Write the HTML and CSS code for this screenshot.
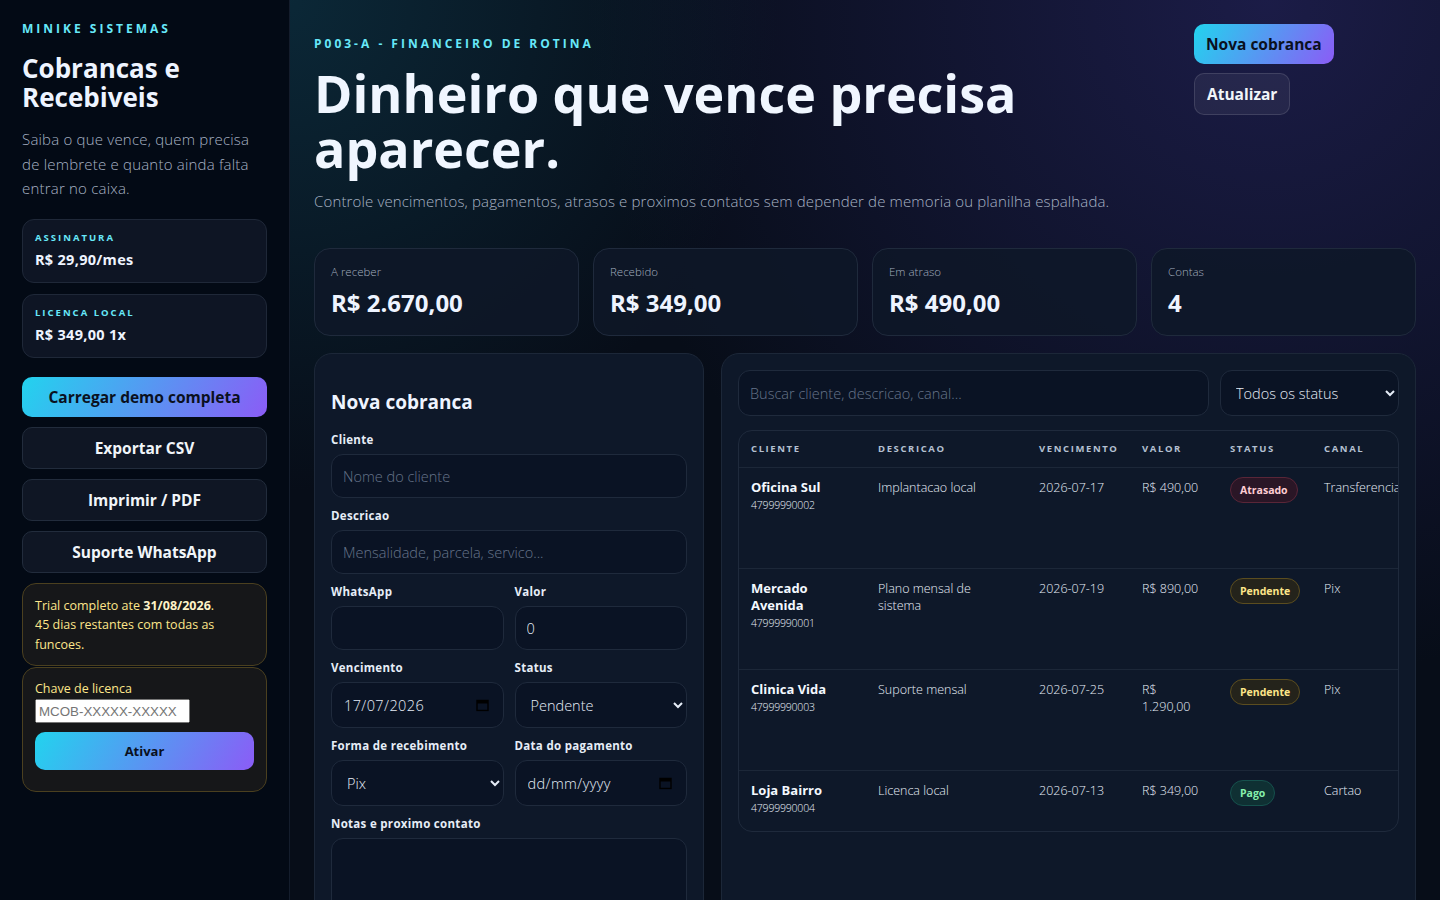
FILE: index.html
```html
<!DOCTYPE html>
<html lang="pt-BR">
<head>
  <meta charset="UTF-8">
  <title>Cobrancas e Recebiveis - Minike Sistemas</title>
  <meta name="viewport" content="width=device-width, initial-scale=1.0">
  <link rel="stylesheet" href="styles.css">
</head>
<body>
  <div class="app">
    <aside class="sidebar">
      <div class="brand">MINIKE SISTEMAS</div>
      <h1 class="side-title">Cobrancas e Recebiveis</h1>
      <p class="side-text">Saiba o que vence, quem precisa de lembrete e quanto ainda falta entrar no caixa.</p>

      <div class="plan">
        <span class="plan-label">Assinatura</span>
        <strong class="plan-price">R$ 29,90/mes</strong>
      </div>
      <div class="plan">
        <span class="plan-label">Licenca local</span>
        <strong class="plan-price">R$ 349,00 1x</strong>
      </div>

      <div class="side-actions">
        <button class="btn btn-primary btn-block">Carregar demo completa</button>
        <button class="btn btn-ghost btn-block">Exportar CSV</button>
        <button class="btn btn-ghost btn-block">Imprimir / PDF</button>
        <button class="btn btn-ghost btn-block">Suporte WhatsApp</button>
      </div>

      <div class="trial">
        Trial completo ate <b>31/08/2026</b>.<br>
        45 dias restantes com todas as funcoes.
      </div>
      <div class="license">
        <label for="licenseKey">Chave de licenca</label>
        <input id="licenseKey" class="license-input" placeholder="MCOB-XXXXX-XXXXX">
        <button class="btn btn-primary btn-block btn-small">Ativar</button>
      </div>
    </aside>

    <main class="main">
      <header class="hero">
        <div class="hero-text">
          <div class="eyebrow">P003-A - FINANCEIRO DE ROTINA</div>
          <h2 class="hero-title">Dinheiro que vence precisa aparecer.</h2>
          <p class="hero-sub">Controle vencimentos, pagamentos, atrasos e proximos contatos sem depender de memoria ou planilha espalhada.</p>
        </div>
        <div class="hero-actions">
          <button class="btn btn-primary">Nova cobranca</button>
          <button class="btn btn-soft">Atualizar</button>
        </div>
      </header>

      <section class="stats">
        <div class="stat"><span>A receber</span><strong>R$ 2.670,00</strong></div>
        <div class="stat"><span>Recebido</span><strong>R$ 349,00</strong></div>
        <div class="stat"><span>Em atraso</span><strong>R$ 490,00</strong></div>
        <div class="stat"><span>Contas</span><strong>4</strong></div>
      </section>

      <section class="workspace">
        <form class="panel form-panel">
          <h3>Nova cobranca</h3>
          <div class="field">
            <label>Cliente</label>
            <input class="control" placeholder="Nome do cliente">
          </div>
          <div class="field">
            <label>Descricao</label>
            <input class="control" placeholder="Mensalidade, parcela, servico...">
          </div>
          <div class="field-row">
            <div class="field">
              <label>WhatsApp</label>
              <input class="control">
            </div>
            <div class="field">
              <label>Valor</label>
              <input class="control" value="0">
            </div>
          </div>
          <div class="field-row">
            <div class="field">
              <label>Vencimento</label>
              <div class="date-box">
                <input class="control control-tall control-date" value="17/07/2026" placeholder="dd/mm/yyyy">
                <svg class="cal-icon" width="13" height="13" viewBox="0 0 13 13" aria-hidden="true">
                  <path d="M1 2h11v10H1z" fill="none" stroke="#000" stroke-width="1.4"/>
                  <path d="M1 2h11v3H1z" fill="#000"/>
                </svg>
              </div>
            </div>
            <div class="field">
              <label>Status</label>
              <select class="control control-tall">
                <option>Pendente</option>
                <option>Pago</option>
                <option>Atrasado</option>
              </select>
            </div>
          </div>
          <div class="field-row">
            <div class="field">
              <label>Forma de recebimento</label>
              <select class="control control-tall">
                <option>Pix</option>
                <option>Boleto</option>
                <option>Cartao</option>
                <option>Transferencia</option>
              </select>
            </div>
            <div class="field">
              <label>Data do pagamento</label>
              <div class="date-box">
                <input class="control control-tall control-date" placeholder="dd/mm/yyyy">
                <svg class="cal-icon" width="13" height="13" viewBox="0 0 13 13" aria-hidden="true">
                  <path d="M1 2h11v10H1z" fill="none" stroke="#000" stroke-width="1.4"/>
                  <path d="M1 2h11v3H1z" fill="#000"/>
                </svg>
              </div>
            </div>
          </div>
          <div class="field">
            <label>Notas e proximo contato</label>
            <textarea class="control control-area" rows="4"></textarea>
          </div>
          <button type="button" class="btn btn-primary btn-block">Salvar cobranca</button>
        </form>

        <section class="panel list-panel">
          <div class="toolbar">
            <input class="control control-tall search" placeholder="Buscar cliente, descricao, canal...">
            <select class="control control-tall filter">
              <option>Todos os status</option>
              <option>Pendente</option>
              <option>Pago</option>
              <option>Atrasado</option>
            </select>
          </div>

          <div class="table-wrap">
            <table class="charges">
              <colgroup>
                <col style="width:127px">
                <col style="width:161px">
                <col style="width:103px">
                <col style="width:88px">
                <col style="width:94px">
                <col style="width:120px">
              </colgroup>
              <thead>
                <tr>
                  <th>Cliente</th>
                  <th>Descricao</th>
                  <th>Vencimento</th>
                  <th>Valor</th>
                  <th>Status</th>
                  <th>Canal</th>
                </tr>
              </thead>
              <tbody>
                <tr>
                  <td><strong>Oficina Sul</strong><small>47999990002</small></td>
                  <td>Implantacao local</td>
                  <td>2026-07-17</td>
                  <td>R$ 490,00</td>
                  <td><span class="badge late">Atrasado</span></td>
                  <td>Transferencia</td>
                </tr>
                <tr>
                  <td><strong>Mercado Avenida</strong><small>47999990001</small></td>
                  <td>Plano mensal de sistema</td>
                  <td>2026-07-19</td>
                  <td>R$ 890,00</td>
                  <td><span class="badge pending">Pendente</span></td>
                  <td>Pix</td>
                </tr>
                <tr>
                  <td><strong>Clinica Vida</strong><small>47999990003</small></td>
                  <td>Suporte mensal</td>
                  <td>2026-07-25</td>
                  <td>R$ 1.290,00</td>
                  <td><span class="badge pending">Pendente</span></td>
                  <td>Pix</td>
                </tr>
                <tr>
                  <td><strong>Loja Bairro</strong><small>47999990004</small></td>
                  <td>Licenca local</td>
                  <td>2026-07-13</td>
                  <td>R$ 349,00</td>
                  <td><span class="badge paid">Pago</span></td>
                  <td>Cartao</td>
                </tr>
              </tbody>
            </table>
          </div>
        </section>
      </section>
    </main>
  </div>
</body>
</html>
```

FILE: styles.css
```css
html {
  scrollbar-width: none;
}

body {
  margin: 0;
  font-family: "Open Sans", "Noto Sans", sans-serif;
  color: #eef4ff;
  background:
    radial-gradient(circle at 20% 0%, rgba(16, 72, 92, 0.45), transparent 32%),
    radial-gradient(circle at 88% 0%, rgba(52, 46, 128, 0.45), transparent 42%),
    #070d18;
  min-height: 100vh;
}

.app {
  display: grid;
  grid-template-columns: 290px minmax(0, 1fr);
  min-height: 100vh;
}

/* sidebar */
.sidebar {
  background: #030a15;
  border-right: 1px solid #141d2c;
  padding: 22px;
}

.brand {
  font-size: 12px;
  line-height: 14px;
  font-weight: 700;
  letter-spacing: 3px;
  color: #67e8f9;
}

.side-title {
  margin: 18px 0 15px;
  font-size: 26px;
  line-height: 29px;
  font-weight: 700;
}

.side-text {
  margin: 0 0 18px;
  font-size: 15px;
  line-height: 24.5px;
  font-weight: 300;
  letter-spacing: 0.2px;
  color: #a7b2c4;
}

.plan {
  background: #0e1524;
  border: 1px solid #1f2838;
  border-radius: 12px;
  padding: 12px 12px 13px;
  margin-bottom: 11px;
}

.plan-label {
  display: block;
  font-size: 9.5px;
  line-height: 12px;
  font-weight: 700;
  letter-spacing: 2px;
  text-transform: uppercase;
  color: #67e8f9;
}

.plan-price {
  display: block;
  margin-top: 7px;
  font-size: 14.5px;
  line-height: 18px;
  letter-spacing: 0.3px;
}

.side-actions {
  display: flex;
  flex-direction: column;
  gap: 10px;
  margin: 19px 0 10px;
}

.btn {
  font-family: inherit;
  font-size: 15.5px;
  line-height: 20px;
  font-weight: 700;
  padding: 10px 12px;
  border-radius: 10px;
  border: 0;
  cursor: pointer;
  white-space: nowrap;
}

.btn-block {
  display: block;
  width: 100%;
}

.btn-primary {
  background: linear-gradient(120deg, #22d3ee, #8b5cf6);
  color: #0a1020;
}

.btn-ghost {
  background: #0f1624;
  border: 1px solid #222c3c;
  color: #f1f5f9;
}

.btn-soft {
  background: rgba(255, 255, 255, 0.06);
  border: 1px solid rgba(255, 255, 255, 0.12);
  color: #f1f5f9;
}

.btn-small {
  font-size: 13px;
  padding: 9px 12px;
}

.trial,
.license {
  background: #161719;
  border: 1px solid #4b401f;
  border-radius: 14px;
  padding: 12px 12px 11px;
  font-size: 12.5px;
  line-height: 19.5px;
  color: #fde68a;
}

.trial b {
  color: #fef3c7;
}

.license {
  margin-top: 1px;
  padding-bottom: 21px;
}

.license label {
  display: block;
  line-height: 18px;
}

.license-input {
  display: block;
  width: 155px;
  height: 24px;
  box-sizing: border-box;
  margin: 1px 0 9px;
}

/* main area */
.main {
  padding: 24px 24px 0;
  min-width: 0;
}

.hero {
  display: grid;
  grid-template-columns: minmax(0, 1fr) 222px;
  gap: 24px;
  align-items: start;
}

.hero-text {
  padding-top: 13px;
}

.eyebrow {
  font-size: 12px;
  line-height: 14px;
  font-weight: 700;
  letter-spacing: 3px;
  color: #67e8f9;
}

.hero-title {
  margin: 14px 0 15px;
  font-size: 52px;
  line-height: 55px;
  font-weight: 700;
  color: #f0f6ff;
  max-width: 760px;
}

.hero-sub {
  margin: 0;
  font-size: 15px;
  line-height: 22px;
  font-weight: 300;
  letter-spacing: 0.14px;
  color: #a7b2c4;
}

.hero-actions {
  display: flex;
  flex-wrap: wrap;
  gap: 9px 10px;
}

.stats {
  display: grid;
  grid-template-columns: repeat(4, 1fr);
  gap: 14px;
  margin-top: 36px;
}

.stat {
  background: rgba(14, 23, 40, 0.85);
  border: 1px solid #1f2a3c;
  border-radius: 16px;
  padding: 15px 16px 17px;
}

.stat span {
  display: block;
  font-size: 11.5px;
  line-height: 16px;
  font-weight: 300;
  color: #a0acbd;
}

.stat strong {
  display: block;
  margin-top: 8px;
  font-size: 24px;
  line-height: 30px;
}

.workspace {
  display: grid;
  grid-template-columns: 390px minmax(0, 1fr);
  gap: 17px;
  margin-top: 17px;
}

.panel {
  background: #0e1829;
  border: 1px solid #1c2738;
  border-radius: 18px;
  padding: 16px;
  min-width: 0;
}

.form-panel h3 {
  margin: 20px 0 18px;
  font-size: 19px;
  line-height: 24px;
}

.field {
  display: flex;
  flex-direction: column;
  gap: 6px;
  margin-bottom: 10px;
  min-width: 0;
}

.field label {
  font-size: 11.5px;
  line-height: 16px;
  font-weight: 700;
  letter-spacing: 0.3px;
  color: #e6edf7;
}

.field-row {
  display: grid;
  grid-template-columns: 1fr 1fr;
  gap: 11px;
}

.control {
  box-sizing: border-box;
  width: 100%;
  height: 44px;
  padding: 0 11px;
  background: #0a1324;
  border: 1px solid #1f2a3c;
  border-radius: 12px;
  font-family: inherit;
  font-size: 14.5px;
  font-weight: 300;
  color: #e6edf7;
}

.control::placeholder {
  color: #66748a;
}

.control-tall {
  height: 46px;
}

.control-area {
  height: 110px;
  resize: vertical;
  padding: 11px;
}

.date-box {
  position: relative;
}

.control-date {
  padding-left: 12px;
  letter-spacing: 0.4px;
}

.control-date::placeholder {
  color: #e6edf7;
}

.cal-icon {
  position: absolute;
  right: 15px;
  top: 50%;
  transform: translateY(-50%);
}

/* list */
.toolbar {
  display: flex;
  gap: 11px;
}

.search {
  flex: 1;
  min-width: 0;
}

.filter {
  width: 179px;
  flex: none;
}

.table-wrap {
  margin-top: 14px;
  border: 1px solid #1f2a3c;
  border-radius: 14px;
  max-height: 400px;
  overflow: hidden;
}

.charges {
  border-collapse: collapse;
  table-layout: fixed;
  width: 693px;
  font-size: 12.5px;
}

.charges th {
  text-align: left;
  font-size: 9.5px;
  line-height: 12px;
  font-weight: 700;
  letter-spacing: 1.6px;
  text-transform: uppercase;
  color: #b4c0d1;
  padding: 12px 12px;
  white-space: nowrap;
}

.charges tbody tr {
  height: 101px;
}

.charges td {
  vertical-align: top;
  padding: 11px 12px;
  border-top: 1px solid #1c2738;
  line-height: 17px;
  font-weight: 300;
  color: #e6edf7;
}

.charges td:last-child {
  white-space: nowrap;
}

.charges td strong {
  display: block;
  font-size: 13px;
  font-weight: 700;
  color: #f4f8ff;
}

.charges td small {
  display: block;
  margin-top: 1px;
  font-size: 10.5px;
  letter-spacing: -0.2px;
}

.badge {
  display: inline-block;
  margin-top: -2px;
  padding: 4px 9px;
  border-radius: 999px;
  font-size: 10.5px;
  line-height: 16px;
  font-weight: 700;
  border: 1px solid;
}

.badge.late {
  background: #2a1626;
  border-color: #5a2638;
  color: #fecdd3;
}

.badge.pending {
  background: #24231b;
  border-color: #5b4d1f;
  color: #fde68a;
}

.badge.paid {
  background: #0f3033;
  border-color: #16514d;
  color: #86efac;
}
```
